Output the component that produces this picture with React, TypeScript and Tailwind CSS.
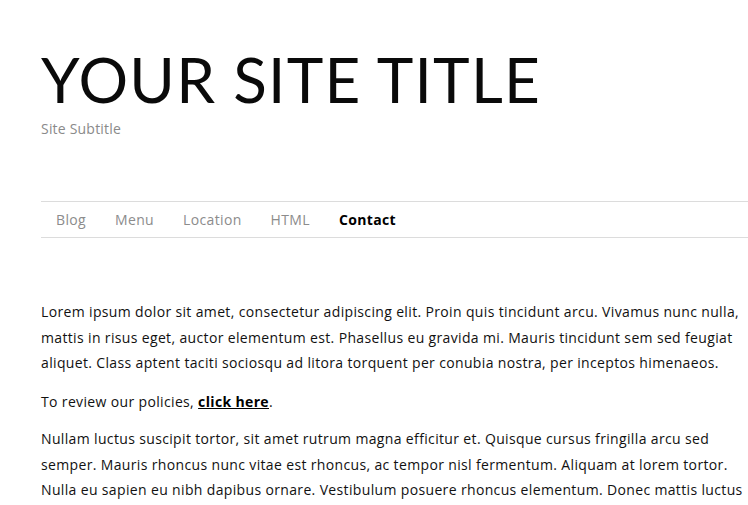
const navItems = ['Blog', 'Menu', 'Location', 'HTML', 'Contact'];

export default function App() {
  return (
    <div className="min-h-screen w-[748px] overflow-hidden bg-white font-['Open_Sans',sans-serif] text-[14px] tracking-[0.35px] text-[#111]">
      <div className="pl-[41px]">
        {/* Header */}
        <header className="pt-[44px]">
          <h1 className="font-['Lato',sans-serif] text-[62px] font-normal leading-[70px] tracking-[1.2px] text-[#0a0a0a]">
            YOUR SITE TITLE
          </h1>
          <p className="mt-[5px] text-[14px] leading-[20px] tracking-[0.2px] text-[#8a8a8a]">Site Subtitle</p>
        </header>

        {/* Navigation */}
        <nav className="mt-[62px] w-[800px] border-y border-[#dcdcdc]">
          <ul className="flex h-[35px] items-center gap-[29px] pl-[15px]">
            {navItems.map((item) => (
              <li
                key={item}
                className={item === 'Contact' ? 'font-bold text-black' : 'text-[#8c8c8c]'}
              >
                {item}
              </li>
            ))}
          </ul>
        </nav>

        {/* Content */}
        <main className="mt-[61px] w-[760px] whitespace-nowrap leading-[25.5px]">
          <p>
            Lorem ipsum dolor sit amet, consectetur adipiscing elit. Proin quis tincidunt arcu. Vivamus nunc nulla,
            <br />
            mattis in risus eget, auctor elementum est. Phasellus eu gravida mi. Mauris tincidunt sem sed feugiat
            <br />
            aliquet. Class aptent taciti sociosqu ad litora torquent per conubia nostra, per inceptos himenaeos.
          </p>
          <p className="mt-[13px]">
            To review our policies,{' '}
            <a href="#" className="font-bold text-black underline">
              click here
            </a>
            .
          </p>
          <p className="mt-[12px]">
            Nullam luctus suscipit tortor, sit amet rutrum magna efficitur et. Quisque cursus fringilla arcu sed
            <br />
            semper. Mauris rhoncus nunc vitae est rhoncus, ac tempor nisl fermentum. Aliquam at lorem tortor.
            <br />
            Nulla eu sapien eu nibh dapibus ornare. Vestibulum posuere rhoncus elementum. Donec mattis luctus
          </p>
        </main>
      </div>
    </div>
  );
}
